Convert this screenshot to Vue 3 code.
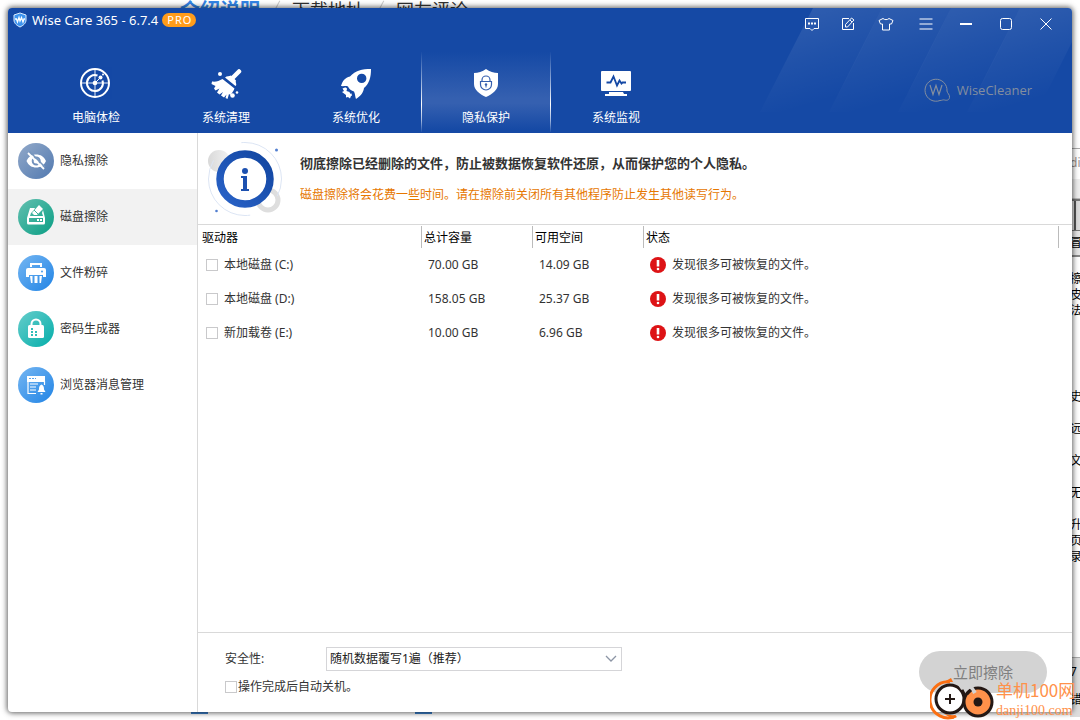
<script setup>
import { ref } from 'vue'

const tabs = [
  { id: 'check', label: '电脑体检' },
  { id: 'clean', label: '系统清理' },
  { id: 'tune', label: '系统优化' },
  { id: 'privacy', label: '隐私保护' },
  { id: 'monitor', label: '系统监视' }
]
const activeTab = ref('privacy')

const tools = [
  { id: 'eraser', label: '隐私擦除' },
  { id: 'disk', label: '磁盘擦除' },
  { id: 'shred', label: '文件粉碎' },
  { id: 'password', label: '密码生成器' },
  { id: 'browser', label: '浏览器消息管理' }
]
const activeTool = ref('disk')

const drives = ref([
  { name: '本地磁盘 (C:)', total: '70.00 GB', free: '14.09 GB', picked: false },
  { name: '本地磁盘 (D:)', total: '158.05 GB', free: '25.37 GB', picked: false },
  { name: '新加载卷 (E:)', total: '10.00 GB', free: '6.96 GB', picked: false }
])
const statusText = '发现很多可被恢复的文件。'
const level = ref('random1')
const shutdown = ref(false)
</script>

<template>
  <div class="desktop">
    <div class="behind" aria-hidden="true">
      <div class="page-tabs">
        <span class="ptab on">介绍说明</span>
        <span class="slash"></span>
        <span class="ptab">下载地址</span>
        <span class="slash"></span>
        <span class="ptab">网友评论</span>
      </div>
      <div class="editor">
        <div class="ed-title">dit</div>
        <div class="ed-band"></div>
        <div class="ed-tools"></div>
        <div class="ed-name">冒</div>
        <div class="ed-text">
          <span>擦</span><span>皮</span><span>法</span>
        </div>
        <div class="ed-list">
          <span>史</span><span>远</span><span>文</span><span>无</span>
        </div>
        <div class="ed-text tail"><span>升</span><span>页</span><span>录</span></div>
        <div class="ed-status"><span>7</span><span>错</span></div>
      </div>
      <i class="task a"></i><i class="task b"></i>
    </div>

    <main class="window">
      <header class="head">
        <svg class="streaks" viewBox="0 0 320 125" aria-hidden="true">
          <defs>
            <linearGradient id="streak" gradientUnits="userSpaceOnUse" x1="55" y1="0" x2="82" y2="90">
              <stop offset="0" stop-color="#fff" stop-opacity="0.11" />
              <stop offset="0.5" stop-color="#fff" stop-opacity="0.05" />
              <stop offset="1" stop-color="#fff" stop-opacity="0" />
            </linearGradient>
          </defs>
          <path d="M61 0h69L78 104H8z" fill="url(#streak)" />
          <path d="M61 0h69L78 104H8z" fill="url(#streak)" transform="translate(69 0)" />
          <path d="M61 0h69L78 104H8z" fill="url(#streak)" transform="translate(138 0)" />
          <path d="M61 0h69L78 104H8z" fill="url(#streak)" transform="translate(207 0)" />
        </svg>

        <div class="titlebar">
          <svg class="app-icon" width="14" height="16" viewBox="0 0 14 16" aria-hidden="true">
            <path d="M7 1l6 2v5c0 3.500-3 5.500-6 7-3-1.500-6-3.500-6-7V3z" fill="#3d94ef" stroke="#dcecff" stroke-width="1" />
            <path d="M2 7h1.500l1 3L6 5.500 7 9l1.500-3.500L10 10l1-3h1" fill="none" stroke="#fff" stroke-width="1.300" />
          </svg>
          <h1 class="title">Wise Care 365 - 6.7.4</h1>
          <span class="pro">PRO</span>
          <div class="tools">
            <button class="tb narrow" aria-label="反馈">
              <svg width="16" height="16" viewBox="0 0 16 16"><path d="M1.500 2.500h13v10H10l-2 2-2-2H1.500z" /><path d="M4 7.500h2M7 7.500h2M10 7.500h2" stroke-width="2" /></svg>
            </button>
            <button class="tb narrow" aria-label="编辑">
              <svg width="16" height="16" viewBox="0 0 16 16"><path d="M9 2.500H2.500v11h11V7" /><path d="M5.500 8.500l6-6.500 2.500 2-6.500 7H5.500zM10 4l2 2" /></svg>
            </button>
            <button class="tb" aria-label="皮肤">
              <svg width="16" height="16" viewBox="0 0 16 16"><path d="M5 2.500c1.500 1.500 4.500 1.500 6 0l4 2-1.500 3.500h-2v6h-7V8h-2L1 4.500z" /></svg>
            </button>
            <button class="tb" aria-label="菜单">
              <svg width="16" height="16" viewBox="0 0 16 16"><path d="M1.500 3h13M1.500 8h13M1.500 13h13" opacity="0.500" stroke-width="2" /></svg>
            </button>
            <button class="tb" aria-label="最小化">
              <svg width="16" height="16" viewBox="0 0 16 16"><path d="M2 8h12" stroke-width="2" /></svg>
            </button>
            <button class="tb" aria-label="最大化">
              <svg width="16" height="16" viewBox="0 0 16 16"><rect x="2.500" y="2.500" width="11" height="11" rx="2" /></svg>
            </button>
            <button class="tb" aria-label="关闭">
              <svg width="16" height="16" viewBox="0 0 16 16"><path d="M2.500 2.500l11 11M13.500 2.500l-11 11" /></svg>
            </button>
          </div>
        </div>

        <div class="navbar">
          <nav class="tabs">
            <button v-for="t in tabs" :key="t.id" class="tab" :class="{ on: activeTab === t.id }" @click="activeTab = t.id">
              <svg width="32" height="32" viewBox="0 0 32 32" aria-hidden="true">
                <template v-if="t.id === 'check'">
                  <path d="M15 2v28M1 16h28" stroke="#fff" stroke-width="1.500" opacity="0.600" />
                  <circle cx="15" cy="16" r="14" fill="none" stroke="#fff" stroke-width="2" />
                  <path d="M17.500 8.500A8 8 0 1 0 22.500 13.500" fill="none" stroke="#fff" stroke-width="2" />
                  <path d="M15 16l7-7" stroke="#fff" stroke-width="1" />
                  <circle cx="15" cy="16" r="2.300" fill="#fff" /><circle cx="20.500" cy="10.500" r="2" fill="#fff" />
                  <circle cx="23" cy="7.500" r="1" fill="#fff" />
                </template>
                <template v-else-if="t.id === 'clean'">
                  <path d="M29 4.500l-7 7" stroke="#fff" stroke-width="4.500" stroke-linecap="round" />
                  <path d="M15 10.500c2-2 4-1 6-2l5 5c-1 2 1.500 4-.5 5.500z" fill="#fff" />
                  <path d="M12.500 12l12 9.500c-1 3-3 5-4 6.500l-1.500-1-1.500 5-2-1 1-3.500-2.500 3-3-2 2-3.500-3.500 2.500-2.500-2 2.500-4-4 2-1.500-2 1.500-2.500L1.500 17 2 14.500c4 .5 7-.5 10.500-2.500z" fill="#fff" />
                  <circle cx="10" cy="7" r="2" fill="#fff" /><circle cx="22.500" cy="28.500" r="2.300" fill="#fff" /><circle cx="27" cy="25.500" r="1.300" fill="#fff" />
                </template>
                <template v-else-if="t.id === 'tune'">
                  <path fill-rule="evenodd" d="M31 2c0 8-1.500 14.500-7 19-.5 4-3 8-8 11-1-2.500-.5-4-2-7.500-2.500-.5-5-2.500-6-5-2-1-4.500 0-7-.5 1.500-5 4-8.500 9-9.500C15.500 3.500 22 2 31 2zM21.700 6.700a4.700 4.700 0 1 0 0 9.400 4.700 4.700 0 0 0 0-9.400z" fill="#fff" />
                  <path d="M5 20.500c1 0 2 .5 2 1.500l-.5 2 3 1c.5 1 0 2 2 1.500l.5 2c-1.500.5-1.500 2-2 3l-2-1.500-2 .5v-2.500L2 25l2-1-1.500-2.500z" fill="#fff" />
                </template>
                <template v-else-if="t.id === 'privacy'">
                  <path d="M16 2c3.500 2.500 8 4 12 4v11c0 6-6 10.500-12 13C10 27.500 4 23 4 17V6c4 0 8.500-1.500 12-4z" fill="#fff" />
                  <path d="M12 14v-1a4 4 0 0 1 8 0v1M10.500 14.500h11v3a5.500 5.500 0 0 1-11 0z" fill="none" stroke="#365fae" stroke-width="1.200" />
                  <circle cx="16" cy="17.500" r="1.200" fill="#365fae" /><path d="M16 18v2.500" stroke="#365fae" />
                </template>
                <template v-else>
                  <rect x="1" y="4" width="30" height="20" rx="1" fill="#fff" />
                  <path d="M9 25h14l1 2h3v2H5v-2h4z" fill="#fff" />
                  <path d="M6.500 15.500h4l3-6 3.500 9 2.500-5 2 3 1-1H26" fill="none" stroke="#1549a5" stroke-width="1.800" />
                </template>
              </svg>
              <span>{{ t.label }}</span>
            </button>
          </nav>
          <a class="brand" href="#">
            <svg width="28" height="26" viewBox="0 0 28 26" aria-hidden="true">
              <path d="M17 23.500A11 11 0 1 1 24 14c0 2 3 3.500 2.500 6.500-.5 3-3 3-5 2.500-1.500-.5-2.500.5-4.500.5z" fill="none" stroke="#838e9f" />
              <path d="M7 8l3 9.500L13 8.500l3 9L19 8" fill="none" stroke="#838e9f" stroke-width="1.200" />
            </svg>
            <span>WiseCleaner</span>
          </a>
        </div>
      </header>

      <div class="body">
        <aside class="side">
          <button v-for="t in tools" :key="t.id" class="item" :class="{ on: activeTool === t.id }" @click="activeTool = t.id">
            <span class="disc" :class="t.id">
              <svg width="36" height="36" viewBox="0 0 36 36" aria-hidden="true">
                <template v-if="t.id === 'eraser'">
                  <path fill-rule="evenodd" d="M8.500 18c2-4.500 5.500-6.500 9.700-6.500S26 13.500 28 18c-2 4.500-5.500 6.500-9.800 6.500S10.500 22.500 8.500 18zM18.200 13.500a4.500 4.500 0 1 0 0 9 4.500 4.500 0 0 0 0-9z" fill="#fff" />
                  <circle cx="18.200" cy="18" r="2.500" fill="#fff" />
                  <path d="M11.500 8.500l15.500 15.500" stroke="#7595bd" stroke-width="1.500" />
                  <path d="M10 10l16 16" stroke="#fff" stroke-width="1.800" />
                </template>
                <template v-else-if="t.id === 'disk'">
                  <path fill-rule="evenodd" d="M12 9h5l-1 2-3 3-1 3h13l-1-3 1-3 2 8v5a1.500 1.500 0 0 1-1.500 1.500h-15A1.500 1.500 0 0 1 9 24v-5zM11 19v4h14v-4z" fill="#fff" />
                  <path d="M21 6l4 4-6 6h-3l-2-2z" fill="#fff" /><path d="M16 11l4 4" stroke="#3cae99" stroke-width="1" />
                  <path d="M19 21h2M22 21h2" stroke="#fff" stroke-width="2" />
                </template>
                <template v-else-if="t.id === 'shred'">
                  <path d="M13 12V9h10v3" fill="none" stroke="#fff" stroke-width="2" />
                  <path d="M10 13h16a2 2 0 0 1 2 2v7h-3v-2H11v2H8v-7a2 2 0 0 1 2-2z" fill="#fff" />
                  <circle cx="24" cy="16.500" r="1" fill="#4a9ceb" />
                  <path d="M12 21h2.500v7H13zM16.500 21h3v7h-3zM21.500 21H24l-1 7h-1.500z" fill="#fff" />
                </template>
                <template v-else-if="t.id === 'password'">
                  <path d="M13.500 15v-2a4.500 4.500 0 0 1 9 0v2" fill="none" stroke="#fff" stroke-width="2" />
                  <rect x="10" y="14" width="16" height="13" rx="1.500" fill="#fff" />
                  <path d="M13 18h2M13 21h2M13 24h2M17 21h2M17 24h2" stroke="#31bdb9" stroke-width="1.800" />
                </template>
                <template v-else>
                  <path fill-rule="evenodd" d="M9 9h18v6H9zM11 11v1h2v-1zM14 11v1h2v-1zM17 11v1h1v-1z" fill="#fff" />
                  <path d="M10 14v12.500h8M26.500 14v4" fill="none" stroke="#fff" stroke-width="1.200" />
                  <path d="M12 17h8M12 20h6M12 23h6" stroke="#fff" stroke-width="1.200" />
                  <path d="M23.500 17.500c2.500 1 2.500 3 2.500 5l1.500 2.500h-8l1.500-2.500c0-2 0-4 2.500-5zM22.500 26h2v1.500h-2z" fill="#fff" />
                </template>
              </svg>
            </span>
            <span>{{ t.label }}</span>
          </button>
        </aside>

        <section class="main">
          <div class="banner">
            <svg width="84" height="80" viewBox="0 0 84 80" aria-hidden="true">
              <defs>
                <linearGradient id="ring" x1="0" y1="1" x2="1" y2="0"><stop offset="0" stop-color="#2a63c8" /><stop offset="1" stop-color="#1145a0" /></linearGradient>
                <linearGradient id="ball"><stop offset="0" stop-color="#d9d9d9" /><stop offset="1" stop-color="#f2f2f2" /></linearGradient>
              </defs>
              <circle cx="17" cy="22" r="11" fill="url(#ball)" />
              <circle cx="66" cy="61" r="10" fill="none" stroke="#dedede" stroke-width="5" />
              <circle cx="43" cy="40" r="36.500" fill="none" stroke="#dce5f4" stroke-dasharray="82 34 82 34" stroke-dashoffset="64" />
              <circle cx="43" cy="40" r="25" fill="#fff" stroke="url(#ring)" stroke-width="7.500" />
              <circle cx="43" cy="32" r="3" fill="#1d51b0" />
              <path d="M39 37h6v13h2v2h-8v-2h2V39h-2z" fill="#1d51b0" />
              <circle cx="74.500" cy="11" r="1.500" fill="#527fd0" /><circle cx="14.500" cy="72" r="1.300" fill="#527fd0" />
            </svg>
            <div class="notes">
              <h2>彻底擦除已经删除的文件，防止被数据恢复软件还原，从而保护您的个人隐私。</h2>
              <p>磁盘擦除将会花费一些时间。请在擦除前关闭所有其他程序防止发生其他读写行为。</p>
            </div>
          </div>

          <div class="list">
            <table>
              <colgroup><col class="c1" /><col class="c2" /><col class="c2" /><col /><col class="c5" /></colgroup>
              <thead>
                <tr>
                  <th scope="col"><div>驱动器</div></th>
                  <th scope="col"><div class="sep">总计容量</div></th>
                  <th scope="col"><div class="sep">可用空间</div></th>
                  <th scope="col"><div class="sep">状态</div></th>
                  <td><div class="sep"></div></td>
                </tr>
              </thead>
              <tbody>
                <tr v-for="d in drives" :key="d.name">
                  <td><label class="pick"><input v-model="d.picked" type="checkbox" />{{ d.name }}</label></td>
                  <td class="num">{{ d.total }}</td>
                  <td class="num">{{ d.free }}</td>
                  <td colspan="2">
                    <div class="status">
                      <svg width="16" height="16" viewBox="0 0 16 16" aria-hidden="true">
                        <circle cx="8" cy="8" r="8" fill="#dd1316" />
                        <path d="M6.700 3h2.600v6.500H6.700z" fill="#fff" /><circle cx="8" cy="12" r="1.300" fill="#fff" />
                      </svg>
                      <span>{{ statusText }}</span>
                    </div>
                  </td>
                </tr>
              </tbody>
            </table>
          </div>

          <footer class="foot">
            <div class="options">
              <div class="row">
                <label for="level">安全性:</label>
                <div class="combo">
                  <select id="level" v-model="level"><option value="random1">随机数据覆写1遍（推荐）</option></select>
                  <svg width="12" height="8" viewBox="0 0 12 8" aria-hidden="true"><path d="M1 1l5 5 5-5" fill="none" stroke="#8c95a5" stroke-width="1.300" /></svg>
                </div>
              </div>
              <label class="off"><input v-model="shutdown" type="checkbox" />操作完成后自动关机。</label>
            </div>
            <button class="go" disabled>立即擦除</button>
          </footer>
        </section>
      </div>
    </main>

    <div class="mark">
      <svg width="64" height="44" viewBox="0 0 64 44" aria-hidden="true">
        <path d="M20 6A18 18 0 1 0 26 40" fill="none" stroke="#fb6f12" stroke-width="3" />
        <path d="M14 6l7-4 2 4z" fill="#fb6f12" /><path d="M14 38l9 5 4-3z" fill="#fb6f12" />
        <circle cx="20" cy="23" r="14" fill="#fff" stroke="#231815" stroke-width="3" />
        <path d="M15 23h10M20 18v10" stroke="#231815" stroke-width="2" />
        <circle cx="48" cy="26" r="14" fill="#ff914a" stroke="#231815" stroke-width="3" />
        <path d="M29 7l4 6M41 11l4 6" fill="none" stroke="#d3d3d3" stroke-width="4" />
        <path d="M32 14l3 6M37 18l4-4" stroke="#231815" stroke-width="3" />
        <circle cx="48" cy="26" r="4.500" fill="#231815" />
      </svg>
      <div class="mark-text"><span>单机100网</span><small>danji100.com</small></div>
    </div>
  </div>
</template>

<style>
body {
  margin: 0;
  overflow: hidden;
}
</style>

<style scoped>
.desktop {
  position: relative;
  box-sizing: border-box;
  min-height: 100vh;
  padding: 8px;
  display: flex;
  overflow: hidden;
  background: #fff;
  color: #333;
  font: 12px/16px "Noto Sans", "Noto Sans CJK SC", sans-serif;
}
.desktop * { box-sizing: border-box; }
button { font: inherit; color: inherit; border: 0; padding: 0; background: none; }

.behind { position: absolute; inset: 0; overflow: hidden; }
.page-tabs { display: flex; padding-left: 180px; align-items: flex-start; }
.ptab { font-size: 18px; line-height: 20px; color: #333; }
.ptab.on { font-size: 20px; line-height: 22px; font-weight: 700; color: #3385e6; }
.slash { width: 1px; height: 14px; margin: 0 15px 0 16px; background: #ccc; transform: rotate(28deg); }
.editor {
  position: absolute;
  right: 0;
  top: 148px;
  bottom: 0;
  width: 10px;
  overflow: hidden;
  color: #000;
  border-top: 1px solid #aaa;
}
.editor span { display: block; }
.ed-title { height: 30px; line-height: 28px; color: #9a8f8b; }
.ed-band { height: 20px; background: #eee; border-bottom: 1px solid #bbb; }
.ed-tools { height: 32px; background: linear-gradient(90deg, #e6e6e6 4px, #555 4px, #555 6px, #ddd 6px); border: solid #777; border-width: 2px 0 1px; }
.ed-name { height: 26px; line-height: 24px; background: #e6e6e6; border-bottom: 2px solid #888; }
.ed-text { padding-top: 14px; }
.ed-list { padding-top: 62px; line-height: 32px; }
.tail { padding-top: 8px; }
.ed-status { margin-top: 92px; height: 60px; background: #ddd; border-top: 1px solid #aaa; line-height: 28px; }
.task { position: absolute; bottom: 6px; width: 17px; height: 3px; background: #3b80cc; }
.task.a { left: 191px; }
.task.b { left: 415px; }

.window {
  position: relative;
  flex: 1;
  min-width: 0;
  display: flex;
  flex-direction: column;
  background: #fff;
  border-radius: 4px;
  overflow: hidden;
  box-shadow: 0 0 5px 1px rgba(0, 0, 0, 0.55), 0 0 10px rgba(0, 0, 0, 0.15);
}
.head { position: relative; height: 125px; background: #1549a5; color: #fff; }
.streaks { position: absolute; right: 0; top: 0; width: 320px; height: 125px; }
.titlebar { position: relative; display: flex; height: 32px; padding: 0 6px 0 5px; }
.app-icon { margin-top: 4px; }
.title { margin: 4px 4px 0 5px; font-size: 13px; line-height: 16px; font-weight: 400; }
.pro {
  height: 14px;
  margin-top: 5px;
  padding: 0 4px 0 5px;
  border-radius: 7px;
  background: #ff9c1b;
  font-size: 11px;
  line-height: 14px;
  letter-spacing: 1px;
}
.tools { display: flex; margin-left: auto; }
.tb { display: grid; place-items: center; width: 40px; }
.tb.narrow { width: 36px; }
.tb svg { fill: none; stroke: #fff; stroke-width: 1; }
.navbar { position: relative; display: flex; justify-content: space-between; padding: 12px 40px 0 23px; }
.tabs { display: flex; }
.tab { display: flex; flex-direction: column; align-items: center; gap: 11px; width: 130px; height: 80px; padding-top: 15px; }
.tab.on {
  border: solid;
  border-width: 0 1px;
  border-image: linear-gradient(#1549a5, #9db4dc 40%, #fff 65%, #9db4dc 85%, #1549a5) 1;
  background: linear-gradient(#1549a5, #3560b0 58%, #3560b0 64%, #1549a5 98%);
}
.brand { display: flex; align-items: center; gap: 6px; height: 76px; color: #838e9f; font: 13px/20px "Open Sans", sans-serif; text-decoration: none; }

.body { display: flex; flex: 1; min-height: 0; }
.side { width: 190px; flex: none; border-right: 1px solid #d9d9d9; }
.item { display: flex; align-items: center; gap: 6px; width: 100%; height: 56px; padding-left: 10px; }
.item.on { background: #f2f2f2; }
.disc { width: 36px; height: 36px; border-radius: 50%; }
.disc svg { display: block; }
.eraser { background: linear-gradient(135deg, #92a9c9, #5179b0); }
.disk { background: linear-gradient(135deg, #63c0b0, #0a9e84); }
.shred, .browser { background: linear-gradient(135deg, #75b6f2, #2184e5); }
.password { background: linear-gradient(135deg, #66cdcb, #04aeaa); }

.main { flex: 1; min-width: 0; display: flex; flex-direction: column; }
.banner { display: flex; align-items: center; gap: 14px; height: 92px; padding-left: 4px; border-bottom: 1px solid #d9d9d9; }
.notes h2 { margin: 0 0 16px; font-size: 13px; line-height: 16px; font-weight: 700; }
.notes p { margin: 0; color: #e67700; line-height: 16px; }
.list { flex: 1; padding-right: 12px; }
table { width: 100%; table-layout: fixed; border-collapse: collapse; }
.c1 { width: 223px; }
.c2 { width: 111px; }
.c5 { width: 2px; }
th, td { padding: 0; text-align: left; font-weight: 400; }
th { color: #000; }
th div, td .sep { height: 22px; line-height: 24px; padding-left: 4px; }
thead tr { height: 23px; }
thead .sep { padding-left: 2px; border-left: 1px solid #bbb; }
tbody tr { height: 34px; }
.num { padding-left: 7px; }
.pick, .off { display: flex; align-items: center; }
.pick { padding-left: 8px; gap: 6px; }
.off { gap: 1px; }
input { appearance: none; flex: none; width: 12px; height: 12px; margin: 0; border: 1px solid #c9c9cb; background: #fff; }
input:checked { background: #1549a5; }
.status { display: flex; align-items: center; gap: 6px; padding-left: 7px; }
.foot { display: flex; justify-content: space-between; align-items: flex-start; height: 80px; padding: 14px 25px 0 27px; border-top: 1px solid #d9d9d9; }
.options { display: flex; flex-direction: column; gap: 8px; }
.row { display: flex; align-items: center; }
.row label { width: 101px; }
.combo { position: relative; width: 296px; }
.combo svg { position: absolute; right: 5px; top: 8px; pointer-events: none; }
select { display: block; appearance: none; width: 100%; height: 24px; padding: 0 24px 0 3px; border: 1px solid #d5d5d8; border-radius: 0; background: #fff; color: #222; font: inherit; }
.go { width: 128px; height: 42px; margin-top: 4px; border-radius: 21px; background: #d3d3d3; color: #808080; font-size: 15px; }

.mark { position: absolute; right: 0; bottom: 0; display: flex; width: 150px; height: 44px; pointer-events: none; color: #ff914a; }
.mark svg { flex: none; }
.mark-text { display: flex; flex-direction: column; white-space: nowrap; padding-left: 2px; }
.mark-text span { font: 17px/28px "Noto Sans CJK SC", sans-serif; }
.mark-text small { font: 14px/14px "Liberation Serif", serif; }
</style>
